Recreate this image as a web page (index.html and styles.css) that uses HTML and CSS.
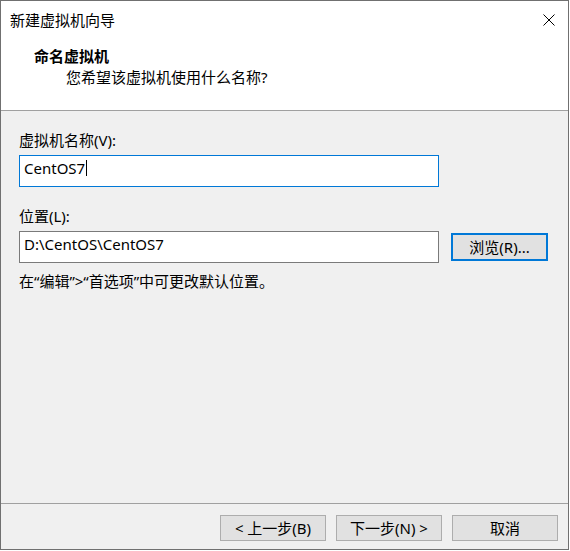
FILE: index.html
```html
<!DOCTYPE html>
<html lang="zh-CN">
<head>
<meta charset="utf-8">
<title>新建虚拟机向导</title>
<link rel="stylesheet" href="styles.css">
</head>
<body>
<div class="window">
  <div class="top">
    <div class="titlebar">
      <span class="title">新建虚拟机向导</span>
      <span class="close"><svg width="12" height="12" viewBox="0 0 12 12"><path d="M0.5 0.5 L11.5 11.5 M11.5 0.5 L0.5 11.5" stroke="#000" stroke-width="1" fill="none"/></svg></span>
    </div>
    <div class="header">
      <div class="h-title">命名虚拟机</div>
      <div class="h-sub">您希望该虚拟机使用什么名称?</div>
    </div>
  </div>
  <div class="content">
    <div class="label">虚拟机名称(V):</div>
    <div class="field focused"><span>CentOS7</span><span class="caret"></span></div>
    <div class="label label-2">位置(L):</div>
    <div class="row">
      <div class="field"><span>D:\CentOS\CentOS7</span></div>
      <div class="btn btn-default">浏览(R)...</div>
    </div>
    <div class="hint">在“编辑”&gt;“首选项”中可更改默认位置。</div>
  </div>
  <div class="footer">
    <div class="btn">&lt; 上一步(B)</div>
    <div class="btn">下一步(N) &gt;</div>
    <div class="btn">取消</div>
  </div>
</div>
</body>
</html>
```
FILE: styles.css
```css
html, body {
  margin: 0;
  padding: 0;
  background: #ffffff;
}
body {
  font-family: "Noto Sans", "Noto Sans CJK SC", sans-serif;
  font-size: 15px;
  color: #000;
}
.window {
  box-sizing: border-box;
  width: 569px;
  height: 550px;
  border: 1px solid #707070;
  display: flex;
  flex-direction: column;
  background: #f0f0f0;
}
.top {
  background: #fff;
  border-bottom: 1px solid #a0a0a0;
  height: 109px;
}
.titlebar {
  height: 37px;
  display: flex;
  align-items: center;
  justify-content: space-between;
  padding: 0 13px 0 9px;
}
.title {
  line-height: 20px;
  color: #000;
}
.close {
  display: flex;
  width: 12px;
  height: 12px;
}
.header {
  padding: 8px 0 0 33px;
}
.h-title {
  font-weight: bold;
  line-height: 21px;
}
.h-sub {
  line-height: 21px;
  padding-left: 32px;
}
.content {
  flex: 1;
  padding: 19px 0 0 18px;
}
.label {
  line-height: 20px;
  height: 20px;
  margin-bottom: 5px;
}
.label-2 {
  margin-top: 19px;
}
.field {
  box-sizing: border-box;
  width: 420px;
  height: 32px;
  background: #fff;
  border: 1px solid #7a7a7a;
  display: flex;
  align-items: center;
  padding: 0 0 7px 4px;
  line-height: 20px;
}
.field.focused {
  border-color: #0078d7;
}
.caret {
  display: inline-block;
  width: 1px;
  height: 16px;
  background: #000;
  margin-left: 1px;
}
.row {
  display: flex;
  align-items: center;
  gap: 12px;
}
.btn {
  box-sizing: border-box;
  width: 106px;
  height: 26px;
  background: #e1e1e1;
  border: 1px solid #adadad;
  display: flex;
  align-items: center;
  justify-content: center;
  line-height: 20px;
  padding-bottom: 1px;
}
.btn-default {
  width: 97px;
  height: 28px;
  border: 2px solid #0078d7;
}
.hint {
  margin-top: 8px;
  line-height: 20px;
}
.footer {
  border-top: 1px solid #a0a0a0;
  height: 46px;
  box-sizing: border-box;
  padding: 11px 10px 0 0;
  display: flex;
  justify-content: flex-end;
  gap: 10px;
}
```
